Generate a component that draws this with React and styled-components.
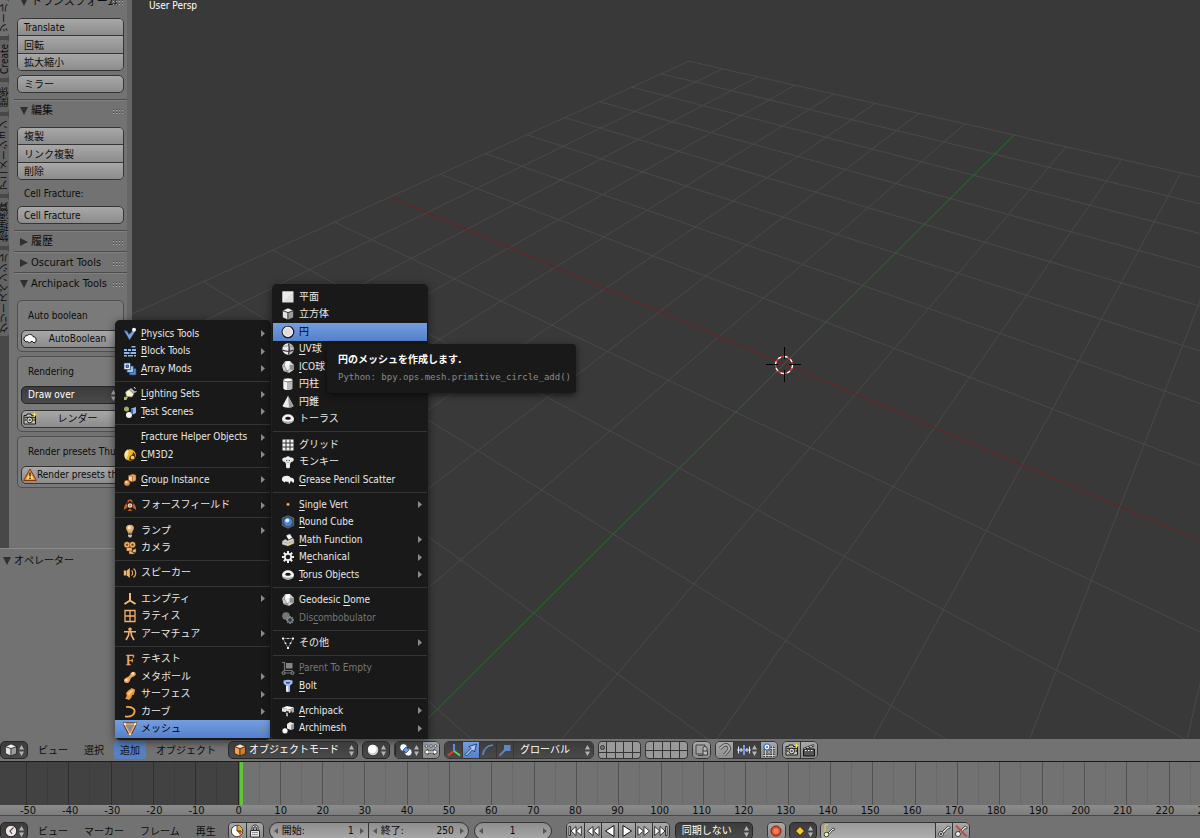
import React from 'react';
import styled, { createGlobalStyle, css } from 'styled-components';

const ui = '"DejaVu Sans Condensed", "Noto Sans", "Noto Sans CJK JP", sans-serif';
const light = 'linear-gradient(#a8a8a8, #8c8c8c)';
const dark = 'linear-gradient(#3c3c3c, #4a4a4a)';
const blue = 'linear-gradient(#759ee0, #5580ca)';
const edge = '#353535';

const GlobalStyle = createGlobalStyle`
  * { box-sizing: border-box; }
  body { margin: 0; background: #393939; font: 10px/16px ${ui}; color: #0c0c0c; }
  button, input, select { font: inherit; color: inherit; margin: 0; padding: 0; border: 0; background: none; outline: 0; border-radius: 0; }
  svg { display: block; flex: none; }
`;

/* ---------- icons ---------- */
const cubes = (a, b, c) => (
  <g stroke="#111" strokeWidth=".6">
    <path d="M1.500 3.500 7 5.500V13L1.500 10.500Z" fill={b} />
    <path d="M12.500 3.500 7 5.500V13l5.500-2.500Z" fill={c} />
    <path d="M7 1 12.500 3.500 7 5.500 1.500 3.500Z" fill={a} />
  </g>
);

const photoCamera = (
  <g>
    <path d="M1 3.500h2.500L4 2h4l.5 1.500H12.500V12H1Z" fill="#c9c2b8" stroke="#1c1c1c" />
    <path d="M1.500 5.500h10.500M1.500 8h1.500M10.500 8h1.500" stroke="#3b3632" strokeWidth="1.500" />
    <circle cx="6.700" cy="8" r="2.800" fill="#eee" stroke="#1c1c1c" />
    <circle cx="6.700" cy="8" r="1.200" fill="#555" />
    <path d="m11.500 0 .8 2 1.700.7-1.700.8-.8 2-.8-2L9 2.700 10.700 2Z" fill="#ffe23a" />
  </g>
);

const torus = (
  <g>
    <ellipse cx="7" cy="7" rx="6" ry="4.700" fill="#f2f2f2" />
    <path d="M1 7.500c.5 5.500 11.500 5.500 12 0-1.500 3-10.500 3-12 0Z" fill="#a4a4a4" />
    <ellipse cx="7" cy="6.200" rx="2.800" ry="1.500" fill="#151515" />
  </g>
);

const dome = (
  <g>
    <path d="M4 1.500 9 1l4 4-.5 5L8 13 2.500 11 1 5.500Z" fill="#cfcfcf" />
    <path d="M4 1.500 9 1 8.500 5 3.500 6.500Z" fill="#fff" />
    <path d="M8.500 5 13 5l-.5 5L8.500 9.500Z" fill="#8f8f8f" />
    <path d="M3.500 6.500 8.500 5l-.2 4.500L6 11Z" fill="#ececec" />
    <path d="M4 1.500l-.5 5L1 5.500M3.500 6.500 6 11l2-1.500M2.500 11 6 11l2 2" stroke="#666" strokeWidth=".6" fill="none" />
  </g>
);

const art = {
  physics: (
    <g>
      <path d="M1 3.500 4 4l2 3.500L10.500 3l1 2.500L6.500 13Z" fill="#7aa6e0" stroke="#2c4b78" strokeWidth=".6" />
      <circle cx="11" cy="2.800" r="2" fill="#fff" />
    </g>
  ),
  blocks: (
    <g fill="#8db8ee">
      <path d="M1 5h3v2H1ZM8.500 2h4v1.500h-4ZM1 8h5.500v2H1ZM7.500 8h5.500v2H7.500ZM5 5h3v2H5ZM9 5h4v2H9ZM1 11h3v1.500H1ZM5 11h5v1.500H5ZM11 11h2v1.500h-2Z" />
    </g>
  ),
  array: (
    <g stroke="#23406b" strokeWidth=".7">
      <path d="M6.500 6.500h6.500v6.500H6.500Z" fill="#5d8dd0" />
      <path d="M4 4h6.500v6.500H4Z" fill="#9ec1ee" />
      <path d="M1 1h6.500v6.500H1Z" fill="#e2ecfa" />
      <path d="M3 3h2.500v2.500H3Z" fill="#5d8dd0" />
    </g>
  ),
  spot: (
    <g>
      <path d="m8 1 4.500 4-2 1.500L6 3Z" fill="#b8b8b8" />
      <path d="M6 2.500 11 7l-2 3-5.500-.5L2.500 5Z" fill="#f5f2d0" stroke="#77755a" strokeWidth=".6" />
      <path d="M1 10 5 9.500 3.500 13H1Z" fill="#b7b56b" />
      <path d="M11 0 12.500 2M12 5l1.500-.5" stroke="#ddd" />
    </g>
  ),
  scene: (
    <g>
      <circle cx="3.500" cy="4" r="2.500" fill="#a2ad63" />
      <circle cx="6" cy="10" r="3" fill="#f5f5f5" />
      <path d="M8 3.500 13 2v6l-3 1.500L8 8Z" fill="#8fb4ee" />
      <path d="M8 3.500 10 4v5.500L8 8Z" fill="#456ca8" />
    </g>
  ),
  maid: (
    <g>
      <circle cx="7" cy="7" r="5.800" fill="#f2b71c" />
      <path d="M4.500 1.500C1 4 .5 9 4 12.500 2 10 5 9 5.500 5c0-2 .5-3-1-3.500Z" fill="#ede3c4" />
      <path d="M7 8c2-.5 3-2 3-4l2 2v3c-1 3-4 4-6 3Z" fill="#4b3510" />
      <circle cx="9.500" cy="9.500" r="1.800" fill="#ffd24a" />
    </g>
  ),
  group: (
    <g stroke="#5a3210" strokeWidth=".5">
      <path d="M5.500 2.500 9.500 1l3.500 1v5.500L9.500 9 5.500 7.500Z" fill="#f0a55c" />
      <path d="M5.500 2.500 9.500 3.500v5.500l-4-1.500Z" fill="#ffd3a5" />
      <circle cx="4" cy="10" r="3" fill="#e99646" />
      <circle cx="3.400" cy="9.200" r="1.100" fill="#ffe1c0" stroke="none" />
    </g>
  ),
  force: (
    <g>
      <path d="M5 4.500C4.500 1.500 9.500 1.500 9 4.500" fill="none" stroke="#c8683a" strokeWidth="1.300" />
      <path d="M4 5 4.500 9.500 1 12C.5 9 2 6.500 4 5ZM10 5 9.500 9.500 13 12c.5-3-1-5.500-3-7Z" fill="#bd5f2a" />
      <path d="M4.500 13h5l-2.500-2.500Z" fill="#bd5f2a" />
      <circle cx="7" cy="7.500" r="2.300" fill="#ffd7b0" />
      <circle cx="7" cy="7.500" r="1" fill="#cf6b2d" />
    </g>
  ),
  lamp: (
    <g>
      <path d="M7 .8c5 0 4.500 4.700 2.300 6.700v1.300H4.700V7.500C2.500 5.500 2 .8 7 .8Z" fill="#e7ad6c" />
      <circle cx="6.300" cy="3.700" r="1.600" fill="#ffe9cc" />
      <path d="M5 9.500h4v2.500L8 13.500H6L5 12Z" fill="#c9c0b4" />
      <path d="M5 10.500h4" stroke="#555" />
    </g>
  ),
  movie: (
    <g fill="#f0b46d" stroke="#5a3510" strokeWidth=".4">
      <circle cx="4" cy="3.700" r="3" />
      <circle cx="9.500" cy="3.700" r="3" />
      <path d="M3.500 6.500H9V10H3.500ZM9.500 9l3.500-1.500v4L9.500 11Z" />
      <path d="M6 10h2l4 3H6Z" />
      <circle cx="4" cy="3.700" r="1" fill="#7c4e22" />
      <circle cx="9.500" cy="3.700" r="1" fill="#7c4e22" />
    </g>
  ),
  speaker: (
    <g>
      <path d="M.8 4.500h2.500v5H.8ZM3.800 4.500 6.800 2v10L3.800 9.500Z" fill="#f6b467" />
      <path d="M8.500 4.500c1.500 1 1.500 4 0 5M10.500 2.500c3 2 3 7 0 9" fill="none" stroke="#f3a452" strokeWidth="1.200" />
    </g>
  ),
  empty: <path d="M7 1v7.500L1.500 12M7 8.500l5.500 3.500" fill="none" stroke="#f7b878" strokeWidth="2" />,
  lattice: <path d="M2 1.500h10v11H2ZM7 1.500v11M2 7h10" fill="none" stroke="#f3b06a" strokeWidth="1.300" />,
  armature: (
    <g stroke="#f3b06a" strokeWidth="1.600" fill="none">
      <circle cx="7" cy="2.300" r="1" />
      <path d="M1 4.800h12M6 5 5.500 8.500 3 13M8 5l.5 3.500L11 13" />
    </g>
  ),
  text: <text x="7" y="12.500" textAnchor="middle" fill="#f3b06a" stroke="#f3b06a" strokeWidth=".4" fontFamily="Liberation Serif, serif" fontSize="15">F</text>,
  meta: (
    <g>
      <path d="M2 8.500C4 7 6 7 7.200 4.500c1-4 5.800-3.500 5.500-.5 0 3-3.500 2-5 4.500C6.500 12 6 13 3.500 13 .5 12.500.5 9.500 2 8.500Z" fill="#e9a662" />
      <circle cx="9.800" cy="3.500" r="1.300" fill="#ffe3c4" /><circle cx="3.400" cy="10" r="1.300" fill="#ffe3c4" />
    </g>
  ),
  surface: (
    <g>
      <path d="M3 6C4.500 5 5 3 7 2.500L8.500 1 12 2.500c0 2.500-1 3-1 5-2 0-2.500 1.500-2.500 3L6 13 2 11.500C4 9.500 4 8.500 3 6Z" fill="#ef9b3c" />
      <path d="M4.500 6.500C6 6 6.500 4 8.500 3.500L10 3c-.5 2.500-3.500 2.500-3.500 6Z" fill="#ffd6a2" />
    </g>
  ),
  curve: <path d="M3 2c7-1 10 3 8 6.500-1.500 2.500-5 3.500-9 2.800" fill="none" stroke="#f5ab4c" strokeWidth="1.700" />,
  mesh: (
    <g>
      <path d="M1.500 2h11L7 12.500Z" fill="#b98a57" stroke="#3a2108" strokeWidth="2.800" />
      <path d="M1.500 2h11L7 12.500Z" fill="#8d8a96" stroke="#f2b26f" strokeWidth="1.400" />
      <circle cx="1.800" cy="2" r="1.300" fill="#ffdfb8" /><circle cx="12.200" cy="2" r="1.300" fill="#ffdfb8" /><circle cx="7" cy="12.200" r="1.300" fill="#ffdfb8" />
    </g>
  ),
  plane: <g><path d="M1.500 1.500h11v11h-11Z" fill="#dedede" /><path d="M1.500 1.500h11L1.500 12.500Z" fill="#ececec" /></g>,
  cube: cubes('#f5f5f5', '#e2e2e2', '#9c9c9c'),
  objectCube: cubes('#ffe6c8', '#f0a250', '#d27d2c'),
  circle: <g><circle cx="7" cy="7" r="5.700" fill="#e2dcda" stroke="#1a1a1a" strokeWidth="1.300" /><circle cx="6.700" cy="6.700" r="4.600" fill="none" stroke="#f7f7f7" /></g>,
  uv: (
    <g>
      <circle cx="7" cy="7" r="5.700" fill="#ececec" />
      <path d="M7 1.300a5.700 5.700 0 0 1 0 11.400Z" fill="#bcbcbc" />
      <path d="M1.500 8c3 1.500 8 1.500 11 0M7.500 1.500c1 4 1 8 0 11" fill="none" stroke="#222" strokeWidth="1.100" />
      <path d="M2 4.500c3-.8 7-.8 10 0" fill="none" stroke="#777" strokeWidth=".7" />
    </g>
  ),
  dome,
  cylinder: (
    <g>
      <path d="M2.500 3v8.500c1 2 8 2 9 0V3Z" fill="#b8b8b8" />
      <path d="M2.500 3v8.500c.5.8 2 1.300 3.500 1.400V3Z" fill="#f3f3f3" />
      <ellipse cx="7" cy="3" rx="4.500" ry="1.900" fill="#fff" stroke="#444" strokeWidth=".7" />
    </g>
  ),
  cone: <g><path d="M7 .8 12.500 11c-1.500 2.300-9.500 2.300-11 0Z" fill="#ededed" /><path d="M7 .8 12.500 11c-.8 1.200-2.700 1.700-4.500 1.700Z" fill="#9b9b9b" /></g>,
  torus,
  grid: <g><path d="M1.500 1.500h11v11h-11Z" fill="#f1f1f1" /><path d="M5 1.500v11M9 1.500v11M1.500 5h11M1.500 9h11" stroke="#333" /></g>,
  monkey: (
    <g>
      <path d="M1 4 3 2.500h1.500L7 1l2.500 1.500H11L13 4l-1 2.500-2 .5-1 2v3.500L7 13.500 5 12.500V9L4 7 2 6.500Z" fill="#ececec" />
      <path d="M5 5.500h1.300M7.700 5.500H9M7 7v1" stroke="#555" />
    </g>
  ),
  scatter: <path d="M1 7.500C.5 4.500 2 3 4.500 3 6.500 2 9 3.200 9.700 4.700c2.800-.2 3.800 1.800 3.300 4.300l-1 1-1-1.500-1.500-.3-.5 1.800-1 1L7.500 9 4.500 8.500 3.500 9.500Z" fill="#f0f0f0" />,
  vert: <g><circle cx="7" cy="6.500" r="1.800" fill="#b55a17" /><circle cx="7" cy="6.200" r="1" fill="#ffc58a" /></g>,
  roundcube: (
    <g>
      <path d="M7 .8 12.700 3v7.500L7 13.200 1.300 10.500V3Z" fill="#38485e" stroke="#7b8da8" strokeWidth=".6" />
      <circle cx="7" cy="7" r="4.200" fill="#4d83d6" /><circle cx="6.200" cy="5.600" r="2" fill="#e5f0ff" />
    </g>
  ),
  math: (
    <g stroke="#222" strokeWidth=".4">
      <path d="M5 2.500 9 .8l2.500 4L7.500 7Z" fill="#fff" />
      <path d="M1 8 4.500 6l2 1.500L12 5l1.200 2v3.500L7 13.300 1 11.500Z" fill="#d5d2c8" />
      <path d="M1 8.500 7 10.300l6-2.500" fill="none" stroke="#777" /><path d="M6.500 11.800 11.500 9.500" stroke="#e5cb59" strokeWidth="1.200" />
    </g>
  ),
  gear: (
    <g>
      <path d="M7 1v12M1 7h12M2.800 2.800l8.400 8.400M11.200 2.800 2.800 11.200" stroke="#eee" strokeWidth="2" />
      <circle cx="7" cy="7" r="4" fill="#eee" /><circle cx="7" cy="7" r="2.300" fill="#1a1a1a" />
    </g>
  ),
  discom: (
    <g>
      <circle cx="5" cy="5" r="3.800" fill="#777" />
      <path d="M9 5v8M5 9h8M6.200 6.200l5.600 5.600M11.800 6.200l-5.600 5.600" stroke="#7e8a96" strokeWidth="1.500" />
      <circle cx="9" cy="9" r="2.400" fill="#333" stroke="#8a949e" />
    </g>
  ),
  other: (
    <g>
      <path d="M2 2.500h10L7 12Z" fill="none" stroke="#8c8c8c" strokeWidth=".8" />
      <path d="M1 1.500h2v2H1ZM11 1.500h2v2h-2ZM6 11h2v2H6ZM6.200 2h1.600v1H6.200ZM3.700 6.500h1.600v1.500H3.700ZM8.700 6.500h1.600v1.500H8.700Z" fill="#f2f2f2" />
    </g>
  ),
  parent: (
    <g>
      <path d="M5 2h6.500v5.500H5Z" fill="#858585" />
      <path d="M1 1.500h2.500v8M2.500 9.500h9M3.500 12h7" stroke="#777" strokeWidth="1.200" fill="none" />
      <circle cx="2.500" cy="12" r="1.500" fill="#333" stroke="#888" /><circle cx="11.500" cy="12" r="1.500" fill="#333" stroke="#888" />
    </g>
  ),
  bolt: (
    <g>
      <path d="M2.500 1.500 7 .8l4.500.8v3L9 6.500v6L7 13.300 5 12.500v-6L2.500 4.500Z" fill="#9fbceb" />
      <path d="M5 3h4v1.500H5Z" fill="#2b4f8e" /><path d="M5 7h2v5.700l-2-.4Z" fill="#e4edfb" />
    </g>
  ),
  archipack: (
    <g>
      <path d="M1 4 6 2l7 1.500-4 2Z" fill="#fff" /><path d="M1 4l8 1.500V9L1 7.500Z" fill="#e0e0e0" />
      <path d="M9 5.500 13 3.500V8l-2 1v-2L9 9ZM5 8.500l2 .5v3.500l-2-.5Z" fill="#a8a8a8" />
      <path d="M5 6.800l3 .6v1.800l-3-.6Z" fill="#333" />
    </g>
  ),
  archimesh: (
    <g>
      <path d="M6 3 9 1l4 1.500v5L10 9 6 7.500Z" fill="#e9e9e9" /><path d="M10 4 13 2.500v5L10 9Z" fill="#999" />
      <circle cx="4" cy="9.800" r="2.900" fill="#fff" stroke="#1a1a1a" strokeWidth=".5" />
    </g>
  ),
  car: <path d="M1 8C.5 5.500 2 3.500 4.500 3.500c1-1.700 4.500-1.500 5.500 1 2.500 0 3.500 2.500 3 5l-2 1.500-1.500-1.500H8L6.500 11 4.500 9.500 3 10Z" fill="#fafafa" stroke="#111" strokeWidth="1" />,
  photo: photoCamera,
  warn: (
    <g>
      <path d="M7 1 13.300 12.500H.7Z" fill="#f28a1c" stroke="#7c2c08" strokeWidth=".9" strokeLinejoin="round" />
      <path d="M7 4 10.800 11.200H3.200Z" fill="#ffd87b" /><path d="M7 4.500v4M7 9.500v1.500" stroke="#311" strokeWidth="1.400" />
    </g>
  ),
  sphere: <g><circle cx="7" cy="7" r="5.700" fill="#d4d4d4" stroke="#111" strokeWidth=".6" /><circle cx="6.300" cy="6" r="4.200" fill="#fff" /></g>,
  pivot: (
    <g stroke="#16284a" strokeWidth=".6">
      <circle cx="4.500" cy="4.500" r="3.700" fill="#fff" /><circle cx="9.300" cy="9.300" r="3.700" fill="#fff" />
      <path d="m4 7 3-3 3 3-3 3Z" fill="#699ce4" />
    </g>
  ),
  manip: (
    <g>
      <g fill="#dce9ff" stroke="#235" strokeWidth=".7"><circle cx="2.500" cy="3" r="1.400" /><circle cx="7" cy="3" r="1.400" /><circle cx="11.500" cy="3" r="1.400" /></g>
      <path d="M.5 9 4 6v2h6V6l3.500 3L10 12v-2H4v2Z" fill="#fff" stroke="#222" strokeWidth=".7" />
    </g>
  ),
  axes: <g fill="none" strokeWidth="2"><path d="M7 8V1" stroke="#5c8cf0" /><path d="M7 8 1 12.500" stroke="#e53a2d" /><path d="m7 8 6 4.500" stroke="#67d042" /></g>,
  arrow: <path d="M1 11.500 7 5.500 5 3.500 12.500 1 10.500 9 8.500 7 2.500 13Z" fill="#a7c8fa" stroke="#10264e" strokeWidth=".8" />,
  arc: <path d="M2 12C2.500 6 6 2.500 12 2" fill="none" stroke="#5f86c4" strokeWidth="1.600" />,
  scale: <g><path d="m1.500 12.500 6-6" stroke="#5f86c4" strokeWidth="1.800" /><path d="M6 2h6.500v6H6Z" fill="#5f86c4" /></g>,
  lock: (
    <g>
      <path d="M1 2h9v9H1Z" fill="#a0a0a0" stroke="#444" /><path d="M3 12.500h5" stroke="#444" />
      <path d="M8 8V5.500a2 2 0 0 1 4 0V8M8 8h4.500v4H8Z" fill="#bbb" stroke="#333" strokeWidth=".9" />
    </g>
  ),
  magnet: <g fill="none"><path d="M2 5.500 5.500 2.500c4-2.500 7.500 2 4.500 5.500L6.500 12" stroke="#444" strokeWidth="3.400" /><path d="M2 5.500 5.500 2.500c4-2.500 7.500 2 4.500 5.500L6.500 12" stroke="#b0b0b0" strokeWidth="1.800" /></g>,
  snap: <g><path d="M0 7h14M1.500 3.500v7M4 5v4M10 5v4M12.500 3.500v7" stroke="#dce9ff" /><path d="M7 2v10" stroke="#6d9cf0" strokeWidth="2" /></g>,
  snapgrid: (
    <g>
      <path d="M3.500 3v11M7 3v11M10.500 3v11M1 5.500h12M1 9h12M1 12.500h12" stroke="#222" strokeWidth="1.800" />
      <path d="M3.500 3v11M7 3v11M10.500 3v11M1 5.500h12M1 9h12M1 12.500h12" stroke="#eee" strokeWidth=".8" />
      <circle cx="5" cy="4" r="3" fill="#fff" stroke="#336dc5" strokeWidth="1.200" /><circle cx="5" cy="4" r="1" fill="#336dc5" />
    </g>
  ),
  clap: (
    <g>
      <path d="M1.500 6h11v7h-11Z" fill="#555" stroke="#111" /><path d="m1 5.500 10.500-4 .5 1.700L2 6.500Z" fill="#fff" stroke="#111" strokeWidth=".7" />
      <path d="m3.500 4.800 1.500 1M6.500 3.500 8 4.700M9.500 2.500l1.500 1" stroke="#111" /><path d="M3 7.500h1.500M6 7.500h1.500M9 7.500h1.500" stroke="#fff" />
    </g>
  ),
  clock: <g><circle cx="7" cy="7" r="5.700" fill="#eee5e2" stroke="#111" strokeWidth=".8" /><path d="M9.500 3.500 6 7l2 3" fill="none" stroke="#555" strokeWidth="1.200" /></g>,
  pie: <g><circle cx="7" cy="7" r="5.700" fill="#fff" stroke="#222" strokeWidth=".8" /><path d="M7 7V2a5 5 0 0 1 5 5Z" fill="#f3a51d" /><path d="M7 7h5a5 5 0 0 1-2 4Z" fill="#d35d1c" /><path d="M7 2v5h4" fill="none" stroke="#222" strokeWidth=".8" /></g>,
  padlock: <g fill="#e6e6e6" stroke="#222" strokeWidth=".9"><path d="M4 6.500V4c0-4 6-4 6 0v2.500H8.500V4.200c0-2-3-2-3 0v2.300Z" /><path d="M2.500 6.500h9v6.500h-9Z" /><path d="M4 8.500h6M4 10.500h6" stroke="#888" /></g>,
  first: <g fill="#fff" stroke="#111" strokeWidth=".8"><path d="M1 2.500h1.500v9H1ZM8 2.500v9L3 7ZM13.300 2.500v9L8.300 7Z" /></g>,
  rewind: <path d="M7 2.500v9L1.500 7ZM13 2.500v9L7.500 7Z" fill="#fff" stroke="#111" strokeWidth=".8" />,
  back: <path d="M11 1.500v11L2.500 7Z" fill="#fff" stroke="#111" />,
  play: <path d="M3 1.500v11L11.500 7Z" fill="#fff" stroke="#111" />,
  forward: <path d="M1 2.500v9L6.500 7ZM7 2.500v9L12.500 7Z" fill="#fff" stroke="#111" strokeWidth=".8" />,
  last: <g fill="#fff" stroke="#111" strokeWidth=".8"><path d="M.7 2.500v9l5-4.500ZM6 2.500v9L11 7ZM11.500 2.500H13v9h-1.500Z" /></g>,
  record: <g><circle cx="7" cy="7" r="5" fill="#e2512c" stroke="#7a1f0c" /><circle cx="7" cy="7" r="2.600" fill="#ff8260" /></g>,
  keyframe: <path d="m7 2.500 4.500 4.500L7 11.500 2.500 7Z" fill="#ffc233" stroke="#111" strokeWidth=".8" />,
  keyset: <g><path d="M3 1h3M3 1v9" stroke="#cfc35c" strokeWidth="1.600" /><path d="m6 9 5-5 2 1-1 1.500-1-.5-3.500 4" fill="#fff" stroke="#222" strokeWidth=".8" /><circle cx="4.500" cy="10.500" r="2.300" fill="#f4f0b0" stroke="#222" strokeWidth=".8" /></g>,
  key: <g fill="#eee" stroke="#222" strokeWidth=".8"><path d="m5 8 5-5 1.500-1 2 2-1.500 1-1-.5-4.500 5Z" /><circle cx="4" cy="10" r="2.500" /><circle cx="4" cy="10" r=".8" fill="#222" /></g>,
  keyoff: <g><g fill="#eee" stroke="#222" strokeWidth=".8"><path d="m5 8 5-5 1.500-1 2 2-1.500 1-1-.5-4.500 5Z" /><circle cx="4" cy="10" r="2.500" /></g><path d="M2 1.500 12.500 12.500" stroke="#c84848" strokeWidth="2" /></g>,
};

const Icon = ({ name }) => (
  <svg width="14" height="14" viewBox="0 0 14 14" aria-hidden="true">{art[name]}</svg>
);

/* ---------- shared controls ---------- */
const Btn = styled.button`
  position: relative;
  display: flex; align-items: center;
  height: 18px; padding: 2px 6px 0; white-space: nowrap; overflow: hidden;
  background: ${light}; border: 1px solid ${edge}; border-radius: 5px;
`;
const Stack = styled.div`
  display: flex; flex-direction: column; height: 53px;
  border: 1px solid ${edge}; border-radius: 5px; overflow: hidden;
  ${Btn} { flex: 1; border: 0; border-radius: 0; }
  ${Btn} + ${Btn} { border-top: 1px solid ${edge}; }
`;
const UpDownSvg = styled.svg`pointer-events: none; position: absolute; right: 3px; top: 3px;`;
const UpDown = () => (
  <UpDownSvg width="5" height="11" viewBox="0 0 5 11"><path d="M2.500 0 5 4.500H0ZM2.500 11 5 6.500H0Z" fill="#b4b4b4" /></UpDownSvg>
);
const DropBox = styled.span`
  position: relative; display: flex; align-items: center; gap: 2px; flex: none;
  width: ${p => (p.$w ? `${p.$w}px` : 'auto')}; height: 18px; padding-left: ${p => p.$pad || 4}px;
  background: ${dark}; color: #fff; border: 1px solid #262626; border-radius: 5px;
  select { appearance: none; flex: 1; min-width: 0; height: 16px; }
`;
const Drop = ({ w, pad, icon, label, value }) => (
  <DropBox $w={w} $pad={pad}>
    {icon && <Icon name={icon} />}
    <select aria-label={label} defaultValue={value}><option>{value}</option></select>
    <UpDown />
  </DropBox>
);
const IconDrop = styled.button`
  position: relative; display: flex; align-items: center; flex: none;
  width: 28px; height: 18px; padding-left: 3px;
  background: ${dark}; border: 1px solid #262626; border-radius: 5px;
`;
const Tool = styled.button`
  display: flex; align-items: center; justify-content: center; flex: none;
  width: 17px; height: 16px; background: ${p => (p.$on ? blue : p.$dark ? dark : light)};
`;
const Cluster = styled.div`
  display: flex; flex: none; height: 18px; overflow: hidden;
  border: 1px solid ${edge}; border-radius: 5px;
  > * + * { border-left: 1px solid ${edge}; }
  ${DropBox}, ${IconDrop} { height: 16px; border-width: 0 0 0 1px; border-radius: 0; }
  ${IconDrop} { width: 27px; }
`;

/* ---------- frame ---------- */
const Screen = styled.div`display: flex; flex-direction: column; height: 100vh; overflow: hidden;`;
const Main = styled.main`flex: 1; min-height: 0; display: flex;`;
const Shelf = styled.aside`
  flex: none; width: 132px; display: flex; flex-direction: column;
  background: #727272; border-right: 5px solid #666;
`;
const ShelfTop = styled.div`flex: 1; min-height: 0; display: flex; overflow: hidden;`;
const Tabs = styled.nav`
  flex: none; width: 9px; display: flex; flex-direction: column; gap: 4px; background: #484848; overflow: hidden;
`;
const Tab = styled.button`
  flex: none; height: ${p => p.$h}px; width: 9px; display: flex; justify-content: center; align-items: center;
  background: ${p => (p.$on ? '#727272' : '#636363')}; border-radius: 0 3px 3px 0;
  span { writing-mode: vertical-rl; transform: rotate(180deg); white-space: nowrap; line-height: 9px; }
`;
const Panels = styled.div`flex: 1; min-width: 0; padding-left: 5px; margin-top: -9px;`;
const Panel = styled.section`
  padding-bottom: ${p => (p.$open ? 6 : 0)}px;
  & + & { border-top: 1px solid #4c4c4c; box-shadow: inset 0 1px #808080; }
`;
const TitleRow = styled.h2`
  display: flex; align-items: center; gap: 3px; height: 20px; margin: 0; padding: 2px 4px 0 6px;
  font-size: 11px; font-weight: 400; white-space: nowrap;
  span { flex: 1; min-width: 0; }
`;
const Title = ({ open, children, grip = true }) => (
  <TitleRow>
    <svg width="8" height="8" viewBox="0 0 8 8"><path d={open ? 'M0 0H8L4 8Z' : 'M0 0 8 4 0 8Z'} fill="#303030" /></svg>
    <span>{children}</span>
    {grip && <svg width="10" height="5" viewBox="0 0 10 5"><path d="M0 1.500h10M0 4.500h10" stroke="#b0b0b0" strokeDasharray="1 2" /><path d="M0 .5h10M0 3.500h10" stroke="#4a4a4a" strokeDasharray="1 2" /></svg>}
  </TitleRow>
);
const Body = styled.div`display: flex; flex-direction: column; gap: 4px; padding: 7px 3px 0;`;
const Label = styled.div`height: 18px; line-height: 20px; padding-left: 7px; white-space: nowrap;`;
const Box = styled.div`
  display: flex; flex-direction: column; gap: 6px; padding: 5px 3px 3px;
  background: #7a7a7a; border: 1px solid #4f4f4f; border-radius: 5px;
  ${Btn} { padding: 0 1px; }
  ${Btn} span { flex: 1; line-height: 18px; text-align: ${p => (p.$left ? 'left' : 'center')}; }
`;
const Operator = styled.section`
  flex: none; height: 191px; margin-right: -5px; background: #727272; border-top: 1px solid #8a8a8a; padding-top: 1px;
  ${TitleRow} { padding-left: 3px; font-size: 10px; }
`;

const Viewport = styled.div`
  position: relative; flex: 1; min-width: 0; overflow: hidden; background: #393939;
  > svg { position: absolute; inset: 0; width: 100%; height: 100%; }
`;
const ViewName = styled.div`position: relative; padding-left: 17px; line-height: 12px; color: #fff;`;

/* Ground plane: project grid coordinates (u, v in -1..1) on the screen. */
const O = [784, 364], A = [390, 197], B = [1014, 135], ka = 1.381, kb = 1.563;
const project = (u, v) => {
  const w = 1 + u * (ka - 1) + v * (kb - 1);
  return [0, 1].map(i => (O[i] + u * (ka * A[i] - O[i]) + v * (kb * B[i] - O[i])) / w);
};
const seg = (p, q) => `M${p.map(n => n.toFixed(1))}L${q.map(n => n.toFixed(1))}`;
const steps = Array.from({ length: 17 }, (_, i) => (i - 8) / 8).filter(n => n !== 0);
const gridPath = steps.map(n => seg(project(n, -1), project(n, 1)) + seg(project(-1, n), project(1, n))).join('');

const Scene = () => (
  <svg viewBox="132 0 1068 739" preserveAspectRatio="xMidYMid slice" fill="none">
    <path d={gridPath} stroke="#4a4a4a" />
    <path d={seg(project(-1, 0), project(1, 0))} stroke="#701f22" />
    <path d={seg(project(0, -1), project(0, 1))} stroke="#27702b" />
    <circle cx="784" cy="365" r="8.500" stroke="#e33" strokeWidth="1.300" />
    <circle cx="784" cy="365" r="8.500" stroke="#fff" strokeWidth="1.300" strokeDasharray="3.340" />
    <path d="M766 364.500h12M789 364.500h12M784.500 347v12M784.500 370v12" stroke="#000" />
  </svg>
);

/* ---------- header bars ---------- */
const Bar = styled.header`
  position: relative; z-index: 2; display: flex; align-items: center; height: 22px; flex: none;
  background: #727272; white-space: nowrap;
`;
const TimeBar = styled(Bar)`z-index: 0; align-items: flex-start; padding-top: 6px; overflow: hidden;`;
const MenuBar = styled.nav`display: flex; gap: 4px; margin: 0 6px 0 4px;`;
const MenuButton = styled.button`
  height: 18px; padding: 1px 6px 0; border-radius: 3px; background: ${p => (p.$on ? '#5680c2' : 'none')};
`;
const AddMenu = styled.div`position: relative;`;
const Group = styled.div`display: flex; gap: ${p => p.$gap}px; margin-right: ${p => p.$after || 0}px;`;
const Layers = styled.div`
  display: grid; grid-template-columns: repeat(5, 1fr); gap: 1px; width: 43px; height: 18px;
  background: ${edge}; border: 1px solid ${edge}; border-radius: 4px; overflow: hidden;
  button { background: #999; display: flex; align-items: center; padding-left: 1px; }
`;
const LayerBlock = ({ first }) => (
  <Layers>
    {Array.from({ length: 10 }, (_, i) => (
      <button key={i} aria-label={`Layer ${i + 1}`}>
        {first && i === 0 && <svg width="5" height="5"><circle cx="2.500" cy="2.500" r="2" fill="#777" stroke="#333" /></svg>}
      </button>
    ))}
  </Layers>
);
const NumBox = styled.label`
  display: flex; align-items: center; width: ${p => p.$w}px; height: 18px; padding: 0 4px;
  background: linear-gradient(#8e8e8e, #a8a8a8); border: 1px solid ${edge};
  border-radius: ${p => ({ l: '9px 0 0 9px', r: '0 9px 9px 0' }[p.$side] || '9px')};
  border-right-width: ${p => (p.$side === 'l' ? 0 : 1)}px;
  span { padding-left: 4px; }
  input { flex: 1; min-width: 0; text-align: ${p => (p.$side ? 'right' : 'center')}; padding-right: ${p => (p.$side ? 6 : 0)}px; }
`;
const Num = ({ w, side, label, value }) => (
  <NumBox $w={w} $side={side}>
    <svg width="4" height="6"><path d="M4 0V6L0 3Z" fill="#555" /></svg>
    {label && <span>{label}</span>}
    <input aria-label={label ? undefined : 'Frame'} defaultValue={value} />
    <svg width="4" height="6"><path d="M0 0V6L4 3Z" fill="#555" /></svg>
  </NumBox>
);
const KeyField = styled.label`
  display: flex; align-items: center; width: 114px; padding-left: 1px; background: linear-gradient(#999, #b0b0b0);
  input { flex: 1; min-width: 0; }
`;

/* ---------- menus ---------- */
const MenuBox = styled.div`
  position: absolute; display: flex; flex-direction: column; width: 156px;
  background: #191919; border-radius: 5px; box-shadow: 0 2px 8px rgba(0, 0, 0, .55); color: #e8e8e8;
`;
const MainMenu = styled(MenuBox)`left: 1px; bottom: calc(100% + 1px); height: 420px; padding: 5px 1px 2px 0;`;
const SubMenu = styled(MenuBox)`left: 158px; bottom: calc(100% + 2px); height: 455px; padding: 4px 1px 2px; border-radius: 5px 5px 0 0;`;
const Item = styled.button`
  flex: 9 1 0; min-height: 0; display: flex; align-items: center; gap: 4px; padding: 0 5px 0 8px; text-align: left;
  span { flex: 1; }
  u { text-underline-offset: 2px; }
  ${p => p.$on && css`background: ${blue}; color: #000;`}
  &:disabled { color: #777; }
`;
const Rule = styled.hr`
  flex: 4 1 0; min-height: 0; width: 100%; margin: 0; border: 0;
  background: linear-gradient(#353535, #353535) center / 100% 1px no-repeat;
`;
const NoIcon = styled.i`width: 14px;`;

const Menu = ({ items, on }) => items.map((it, i) => {
  if (!it) return <Rule key={i} />;
  const [icon, text, key = -1, more, off] = it;
  return (
    <Item key={i} $on={text === on} disabled={!!off}>
      {icon ? <Icon name={icon} /> : <NoIcon />}
      <span>{key < 0 ? text : <>{text.slice(0, key)}<u>{text[key]}</u>{text.slice(key + 1)}</>}</span>
      {more ? <svg width="4" height="7"><path d="M0 0V7L4 3.500Z" fill="#8a8a8a" /></svg> : null}
    </Item>
  );
});

const addItems = [
  ['physics', 'Physics Tools', 0, 1], ['blocks', 'Block Tools', 0, 1], ['array', 'Array Mods', 0, 1], null,
  ['spot', 'Lighting Sets', 0, 1], ['scene', 'Test Scenes', 0, 1], null,
  [null, 'Fracture Helper Objects', 0, 1], ['maid', 'CM3D2', 0, 1], null,
  ['group', 'Group Instance', 0, 1], null,
  ['force', 'フォースフィールド', -1, 1], null,
  ['lamp', 'ランプ', -1, 1], ['movie', 'カメラ'], null,
  ['speaker', 'スピーカー'], null,
  ['empty', 'エンプティ', -1, 1], ['lattice', 'ラティス'], ['armature', 'アーマチュア', -1, 1], null,
  ['text', 'テキスト'], ['meta', 'メタボール', -1, 1], ['surface', 'サーフェス', -1, 1], ['curve', 'カーブ', -1, 1], ['mesh', 'メッシュ', -1, 1],
];
const meshItems = [
  ['plane', '平面'], ['cube', '立方体'], ['circle', '円'], ['uv', 'UV球', 0], ['dome', 'ICO球', 0],
  ['cylinder', '円柱'], ['cone', '円錐'], ['torus', 'トーラス'], null,
  ['grid', 'グリッド'], ['monkey', 'モンキー'], ['scatter', 'Grease Pencil Scatter', 0], null,
  ['vert', 'Single Vert', 0, 1], ['roundcube', 'Round Cube', 0], ['math', 'Math Function', 0, 1],
  ['gear', 'Mechanical', 1, 1], ['torus', 'Torus Objects', 0, 1], null,
  ['dome', 'Geodesic Dome', 9], ['discom', 'Discombobulator', 3, 0, 1], null,
  ['other', 'その他', -1, 1], null,
  ['parent', 'Parent To Empty', 0, 0, 1], ['bolt', 'Bolt', 0], null,
  ['archipack', 'Archipack', 0, 1], ['archimesh', 'Archimesh', 4, 1],
];

const Tooltip = styled.div`
  position: absolute; left: 55px; top: 60px; padding: 8px 5px 7px 11px; white-space: nowrap;
  background: #191919; border-radius: 4px; box-shadow: 0 2px 6px rgba(0, 0, 0, .6); color: #fff;
  p { margin: 0; font-weight: 700; }
  code { display: block; font: 9px/18px "DejaVu Sans Mono", "Liberation Mono", monospace; color: #8a8a8a; }
`;

/* ---------- timeline ---------- */
const Track = styled.div`
  position: relative; flex: none; height: 44px; background: #727272; border-top: 1px solid #1c1c1c;
  svg { width: 100%; height: 43px; }
`;
const Ruler = styled.div`
  flex: none; height: 11px; overflow: hidden;
  background: linear-gradient(#8c8c8c, #7c7c7c); border-bottom: 1px solid #4a4a4a;
`;
const Marks = styled.div`
  display: grid; grid-template-columns: repeat(29, 1fr); margin: 0 -28px 0 7px;
  font-size: 11px; line-height: 11px; text-align: center;
`;
const frames = Array.from({ length: 29 }, (_, i) => (i - 5) * 10);

const Timeline = () => (
  <>
    <Track>
      <svg viewBox="0 0 1200 43" preserveAspectRatio="none">
        <rect width="238" height="43" fill="#424242" />
        {frames.map(f => {
          const x = Math.round(237.500 + f * 4.233) + 0.5;
          return (
            <g key={f} stroke="#000">
              <path d={`M${x} 0V43`} strokeOpacity=".28" />
              <path d={`M${x + 21} 0V43`} strokeOpacity=".08" />
            </g>
          );
        })}
        <path d="M238.500 0V43" stroke="#222" />
        <rect x="240" width="3" height="43" fill="#5fc63c" />
      </svg>
    </Track>
    <Ruler><Marks>{frames.map(f => <span key={f}>{f}</span>)}</Marks></Ruler>
  </>
);

export default function App() {
  return (
    <Screen>
      <GlobalStyle />
      <Main>
        <Shelf>
          <ShelfTop>
            <Tabs>
              {[['ツール', 36], ['Create', 38], ['関係', 30], ['アニメーション', 78], ['物理演算', 48], ['グリースペンシル', 86]].map(([t, h], i) => (
                <Tab key={t} $h={h} $on={i === 0}><span>{t}</span></Tab>
              ))}
            </Tabs>
            <Panels>
              <Panel $open>
                <Title open>トランスフォーム</Title>
                <Body>
                  <Stack><Btn>Translate</Btn><Btn>回転</Btn><Btn>拡大縮小</Btn></Stack>
                  <Btn>ミラー</Btn>
                </Body>
              </Panel>
              <Panel $open>
                <Title open>編集</Title>
                <Body>
                  <Stack><Btn>複製</Btn><Btn>リンク複製</Btn><Btn>削除</Btn></Stack>
                  <Label>Cell Fracture:</Label>
                  <Btn>Cell Fracture</Btn>
                </Body>
              </Panel>
              <Panel><Title>履歴</Title></Panel>
              <Panel><Title>Oscurart Tools</Title></Panel>
              <Panel $open>
                <Title open>Archipack Tools</Title>
                <Body>
                  <Box>
                    <Label>Auto boolean</Label>
                    <Btn><Icon name="car" /><span>AutoBoolean</span></Btn>
                  </Box>
                  <Box>
                    <Label>Rendering</Label>
                    <Drop label="Rendering" value="Draw over" pad={6} />
                    <Btn><Icon name="photo" /><span>レンダー</span></Btn>
                  </Box>
                  <Box $left>
                    <Label>Render presets Thu...</Label>
                    <Btn><Icon name="warn" /><span>Render presets th...</span></Btn>
                  </Box>
                </Body>
              </Panel>
            </Panels>
          </ShelfTop>
          <Operator><Title open>オペレーター</Title></Operator>
        </Shelf>
        <Viewport>
          <Scene />
          <ViewName>User Persp</ViewName>
        </Viewport>
      </Main>

      <Bar>
        <IconDrop aria-label="Editor type"><Icon name="cube" /><UpDown /></IconDrop>
        <MenuBar>
          <MenuButton>ビュー</MenuButton>
          <MenuButton>選択</MenuButton>
          <AddMenu>
            <MenuButton $on>追加</MenuButton>
            <MainMenu><Menu items={addItems} on="メッシュ" /></MainMenu>
            <SubMenu>
              <Menu items={meshItems} on="円" />
              <Tooltip role="tooltip">
                <p>円のメッシュを作成します.</p>
                <code>Python: bpy.ops.mesh.primitive_circle_add()</code>
              </Tooltip>
            </SubMenu>
          </AddMenu>
          <MenuButton>オブジェクト</MenuButton>
        </MenuBar>
        <Group $gap={4}>
          <Drop w={130} icon="objectCube" label="Mode" value="オブジェクトモード" />
          <IconDrop aria-label="Shading"><Icon name="sphere" /><UpDown /></IconDrop>
          <Cluster>
            <IconDrop aria-label="Pivot"><Icon name="pivot" /><UpDown /></IconDrop>
            <Tool aria-label="Manipulate centers"><Icon name="manip" /></Tool>
          </Cluster>
          <Cluster>
            <Tool $dark aria-label="Manipulator"><Icon name="axes" /></Tool>
            <Tool $on aria-label="Translate"><Icon name="arrow" /></Tool>
            <Tool $dark aria-label="Rotate"><Icon name="arc" /></Tool>
            <Tool $dark aria-label="Scale"><Icon name="scale" /></Tool>
            <Drop w={80} pad={6} label="Orientation" value="グローバル" />
          </Cluster>
          <LayerBlock first />
          <LayerBlock />
          <Cluster><Tool aria-label="Lock"><Icon name="lock" /></Tool></Cluster>
          <Cluster>
            <Tool aria-label="Snap"><Icon name="magnet" /></Tool>
            <IconDrop aria-label="Snap element"><Icon name="snap" /><UpDown /></IconDrop>
            <Tool aria-label="Snap to grid"><Icon name="snapgrid" /></Tool>
          </Cluster>
          <Cluster>
            <Tool aria-label="Render"><Icon name="photo" /></Tool>
            <Tool aria-label="Animation"><Icon name="clap" /></Tool>
          </Cluster>
        </Group>
      </Bar>

      <Timeline />

      <TimeBar>
        <IconDrop aria-label="Editor type"><Icon name="clock" /><UpDown /></IconDrop>
        <MenuBar>
          <MenuButton>ビュー</MenuButton>
          <MenuButton>マーカー</MenuButton>
          <MenuButton>フレーム</MenuButton>
          <MenuButton>再生</MenuButton>
        </MenuBar>
        <Group $gap={5} $after={14}>
          <Cluster>
            <Tool aria-label="Preview range"><Icon name="pie" /></Tool>
            <Tool aria-label="Lock time"><Icon name="padlock" /></Tool>
          </Cluster>
          <Group $gap={0}>
            <Num w={99} side="l" label="開始:" value="1" />
            <Num w={101} side="r" label="終了:" value="250" />
          </Group>
          <Num w={78} value="1" />
        </Group>
        <Group $gap={5} $after={14}>
          <Cluster>
            {['first', 'rewind', 'back', 'play', 'forward', 'last'].map(n => <Tool key={n} aria-label={n}><Icon name={n} /></Tool>)}
          </Cluster>
          <Drop w={78} pad={6} label="Sync" value="同期しない" />
        </Group>
        <Group $gap={3}>
          <Cluster><Tool aria-label="Record"><Icon name="record" /></Tool></Cluster>
          <IconDrop aria-label="Keyframe type"><Icon name="keyframe" /><UpDown /></IconDrop>
          <Cluster>
            <KeyField><Icon name="keyset" /><input aria-label="Keying set" /></KeyField>
            <Tool aria-label="Insert keyframe"><Icon name="key" /></Tool>
            <Tool aria-label="Delete keyframe"><Icon name="keyoff" /></Tool>
          </Cluster>
        </Group>
      </TimeBar>
    </Screen>
  );
}
